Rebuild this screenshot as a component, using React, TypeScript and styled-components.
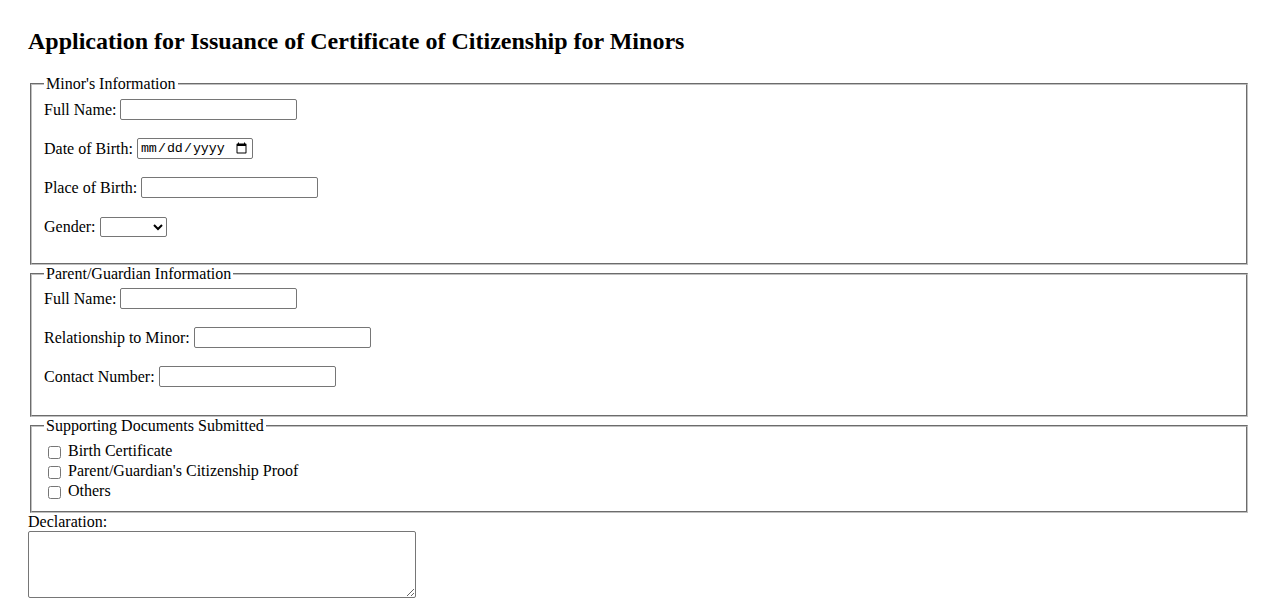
import React from "react";
import styled, { createGlobalStyle } from "styled-components";

const GlobalStyle = createGlobalStyle`
  html, body {
    background: #ffffff;
  }
  body {
    margin: 8px;
    font-family: "Liberation Serif", "Times New Roman", serif;
    font-size: 16px;
    color: #000000;
  }
`;

const Page = styled.div`
  padding: 20px;
`;

const Title = styled.h2`
  font-family: "Liberation Serif", "Times New Roman", serif;
  font-size: 24px;
  font-weight: bold;
  line-height: normal;
  margin: 0 0 19.92px;
`;

const Form = styled.form`
  display: block;
`;

const Section = styled.fieldset<{ $top?: number; $tail?: number }>`
  margin: 0 2px;
  padding: ${(p) => p.$top ?? 6.2}px 12px 10px;
  border: 2px groove rgb(192, 192, 192);
  min-inline-size: min-content;

  & > div:last-child {
    margin-bottom: ${(p) => p.$tail ?? 0}px;
  }
`;

const Legend = styled.legend`
  padding: 0 2px;
  font-size: 16px;
  line-height: normal;
`;

const Row = styled.div`
  display: flex;
  align-items: center;
  gap: 4px;
  height: 21px;
  margin-bottom: 18px;
`;

const Label = styled.label`
  font-size: 16px;
  line-height: 18px;
  white-space: nowrap;
`;

const TextInput = styled.input`
  box-sizing: border-box;
  width: 177px;
  height: 21px;
  padding: 1px 2px;
  border: 1px solid #767676;
  border-radius: 2px;
  background: #fff;
  font-family: "Liberation Sans", Arial, sans-serif;
  font-size: 13.333px;
  margin: 0;
`;

const DateInput = styled.input`
  box-sizing: border-box;
  width: 116px;
  height: 21px;
  padding: 1px 2px;
  border: 1px solid #767676;
  border-radius: 2px;
  background: #fff;
  font-family: "Liberation Mono", "Courier New", monospace;
  font-size: 13.333px;
  color: #000;
  margin: 0;
`;

const Select = styled.select`
  box-sizing: border-box;
  width: 67px;
  height: 20px;
  border: 1px solid #767676;
  border-radius: 2px;
  background: #fff;
  font-family: "Liberation Sans", Arial, sans-serif;
  font-size: 13.333px;
  margin: 0;
`;

const CheckRow = styled.div`
  display: flex;
  align-items: center;
  height: 20px;
`;

const CheckBox = styled.input`
  width: 13px;
  height: 13px;
  margin: 4px 7px 2px 4px;
`;

const Declaration = styled.div`
  display: flex;
  flex-direction: column;
  align-items: flex-start;
`;

const DeclLabel = styled.label`
  font-size: 16px;
  line-height: 18px;
  margin-bottom: 0;
`;

const TextArea = styled.textarea`
  box-sizing: border-box;
  width: 388px;
  height: 67px;
  padding: 2px;
  border: 1px solid #767676;
  border-radius: 2px;
  font-family: "Liberation Mono", monospace;
  font-size: 13.333px;
  margin: 0;
`;

export default function App() {
  return (
    <>
      <GlobalStyle />
      <Page>
        <Title>Application for Issuance of Certificate of Citizenship for Minors</Title>
        <Form onSubmit={(e) => e.preventDefault()}>
          <Section $tail={15.5}>
            <Legend>Minor's Information</Legend>
            <Row>
              <Label htmlFor="mname">Full Name:</Label>
              <TextInput id="mname" type="text" />
            </Row>
            <Row>
              <Label htmlFor="dob">Date of Birth:</Label>
              <DateInput id="dob" type="date" />
            </Row>
            <Row>
              <Label htmlFor="pob">Place of Birth:</Label>
              <TextInput id="pob" type="text" />
            </Row>
            <Row>
              <Label htmlFor="gender">Gender:</Label>
              <Select id="gender" defaultValue="">
                <option value=""></option>
                <option value="male">Male</option>
                <option value="female">Female</option>
              </Select>
            </Row>
          </Section>
          <Section $top={5.6} $tail={17.5}>
            <Legend>Parent/Guardian Information</Legend>
            <Row>
              <Label htmlFor="pname">Full Name:</Label>
              <TextInput id="pname" type="text" />
            </Row>
            <Row>
              <Label htmlFor="rel">Relationship to Minor:</Label>
              <TextInput id="rel" type="text" />
            </Row>
            <Row>
              <Label htmlFor="contact">Contact Number:</Label>
              <TextInput id="contact" type="text" />
            </Row>
          </Section>
          <Section $top={6.6}>
            <Legend>Supporting Documents Submitted</Legend>
            <CheckRow>
              <CheckBox id="doc1" type="checkbox" />
              <Label htmlFor="doc1">Birth Certificate</Label>
            </CheckRow>
            <CheckRow>
              <CheckBox id="doc2" type="checkbox" />
              <Label htmlFor="doc2">Parent/Guardian's Citizenship Proof</Label>
            </CheckRow>
            <CheckRow>
              <CheckBox id="doc3" type="checkbox" />
              <Label htmlFor="doc3">Others</Label>
            </CheckRow>
          </Section>
          <Declaration>
            <DeclLabel htmlFor="decl">Declaration:</DeclLabel>
            <TextArea id="decl" />
          </Declaration>
        </Form>
      </Page>
    </>
  );
}
